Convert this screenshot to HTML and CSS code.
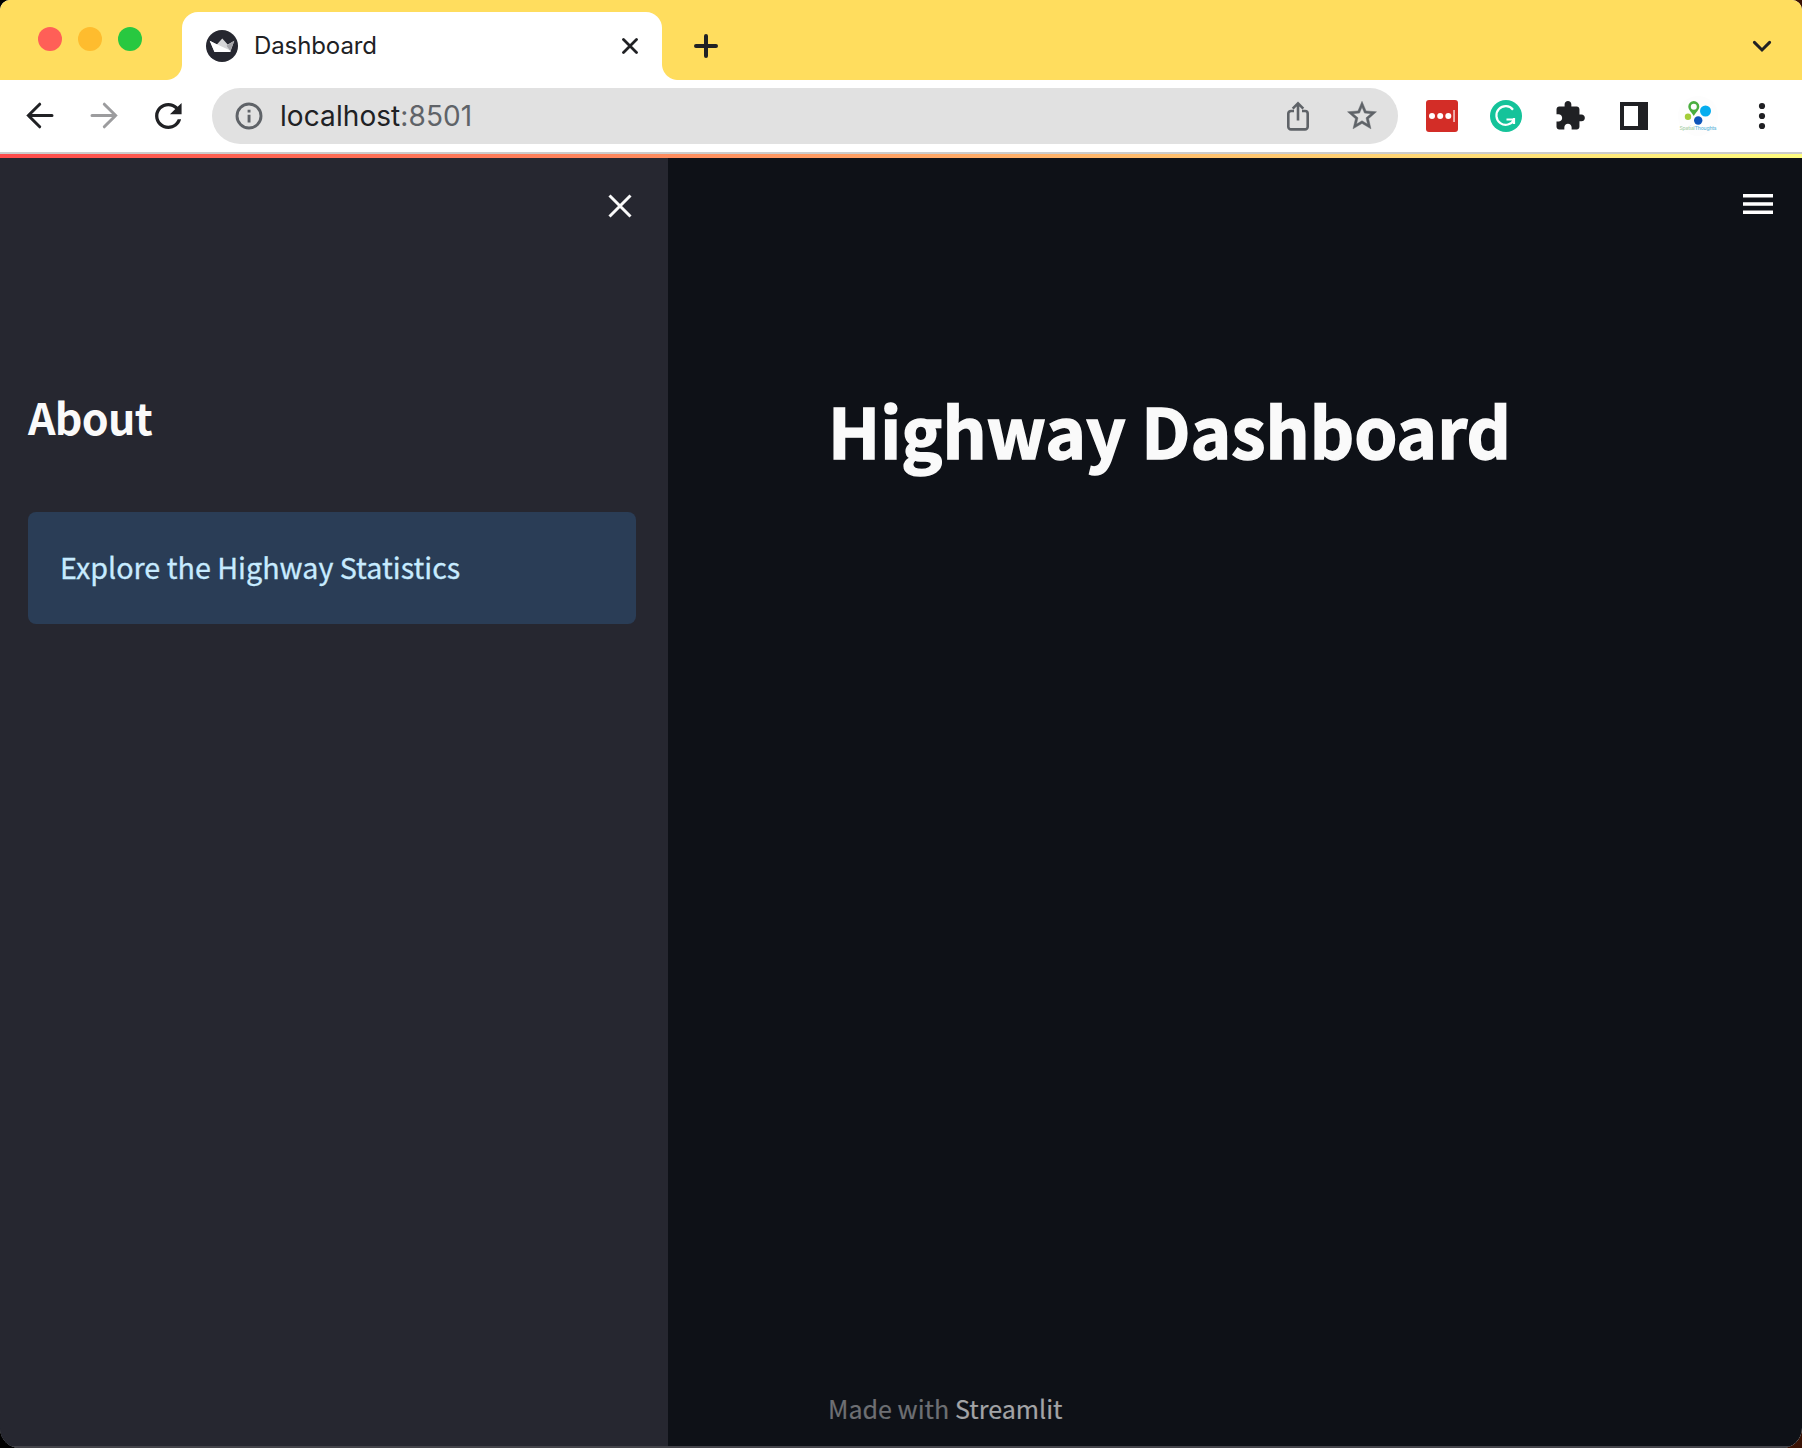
FILE: index.html
```html
<!DOCTYPE html>
<html lang="en">
<head>
<meta charset="utf-8">
<title>Dashboard</title>
<link rel="stylesheet" href="styles.css">
</head>
<body>
<div class="window">
  <header class="tabstrip">
    <div class="lights"><i class="light red"></i><i class="light amber"></i><i class="light green"></i></div>
    <div class="tab">
      <svg class="favicon" viewBox="0 0 32 32"><circle cx="16" cy="16" r="16" fill="#262730"/><path d="M3.700 10.800 10.800 14.500 16.300 8.600 21.700 14.500 28.300 10.800 24.300 22H8.500z" fill="#d6d6d8"/><path d="M3.700 10.800 10.800 14.200 24.300 20.500V22H8.500z" fill="#fff"/><path d="M28.300 10.800 24.300 21 20.500 15.800z" fill="#a2a2a6"/></svg>
      <span class="tab-title">Dashboard</span>
      <svg class="tab-close" viewBox="0 0 16 16"><path d="M1.500 1.500l13 13M14.500 1.500l-13 13"/></svg>
    </div>
    <svg class="new-tab" viewBox="0 0 24 24"><path d="M12 2v20M2 12h20"/></svg>
    <svg class="tab-search" viewBox="0 0 20 14"><path d="M2.400 3.400 10 11l7.600-7.600"/></svg>
  </header>
  <nav class="toolbar">
    <svg class="icon line" viewBox="0 0 40 40"><path d="M32 19.500H8.500M19.700 8.200 8.400 19.500 19.700 30.800"/></svg>
    <svg class="icon line muted" viewBox="0 0 40 40"><path d="M8 19.500h23.500M20.300 8.200l11.300 11.300-11.300 11.300"/></svg>
    <svg class="icon" viewBox="0 0 40 40"><path transform="translate(.4 .5) scale(1.66 1.62)" d="M17.650 6.350C16.200 4.900 14.210 4 12 4c-4.420 0-7.990 3.580-7.990 8s3.570 8 7.990 8c3.730 0 6.840-2.550 7.730-6h-2.080c-.82 2.330-3.040 4-5.650 4-3.310 0-6-2.690-6-6s2.690-6 6-6c1.660 0 3.140.69 4.220 1.780L13 11h7V4l-2.350 2.350z"/></svg>
    <div class="omnibox">
      <svg class="info" viewBox="0 0 28 28"><circle cx="14" cy="14" r="12" fill="none" stroke="#5f6368" stroke-width="2.900"/><path d="M12.600 7.700h2.900v2.900h-2.900zM12.600 12.700h2.900v7.800h-2.900z" fill="#5f6368"/></svg>
      <span class="url">localhost<span class="port">:8501</span></span>
      <svg class="icon grey" viewBox="0 0 40 40"><path fill="none" stroke="#5f6368" stroke-width="2.600" d="M16 15h-3a2.700 2.700 0 0 0-2.700 2.700v13a2.700 2.700 0 0 0 2.700 2.700h14a2.700 2.700 0 0 0 2.700-2.700v-13A2.700 2.700 0 0 0 27 15h-3M20 24.500V8M14.700 12.700 20 7.400l5.300 5.300"/></svg>
      <svg class="icon grey star" viewBox="0 0 40 40"><path transform="translate(2.600 2.400) scale(1.45)" d="M22 9.240l-7.190-.62L12 2 9.190 8.630 2 9.240l5.460 4.730L5.820 21 12 17.270 18.180 21l-1.630-7.030L22 9.240zM12 15.400l-3.760 2.270 1-4.280-3.320-2.880 4.380-.38L12 6.100l1.710 4.040 4.380.38-3.320 2.880 1 4.280L12 15.400z"/></svg>
    </div>
    <svg class="icon" viewBox="0 0 40 40"><rect x="4" y="4" width="32" height="32" rx="3" fill="#d32d27"/><g fill="#fff"><circle cx="10" cy="20" r="3"/><circle cx="18.200" cy="20" r="3"/><circle cx="26.300" cy="20" r="3"/><path d="M31.300 14h1.500v12h-1.500z" opacity=".8"/></g></svg>
    <svg class="icon" viewBox="0 0 40 40"><circle cx="20" cy="20" r="16" fill="#15c39a"/><path d="M27 13.700a9.300 9.300 0 1 0 1 10M20.500 23.500h7.300M28 22v6" fill="none" stroke="#fff" stroke-width="2.200"/></svg>
    <svg class="icon" viewBox="0 0 40 40"><path transform="translate(3.800 3.700) scale(1.35)" d="M20.500 11H19V7c0-1.100-.9-2-2-2h-4V3.500C13 2.120 11.880 1 10.500 1S8 2.120 8 3.500V5H4c-1.100 0-1.990.9-1.990 2v3.800H3.500c1.490 0 2.700 1.210 2.700 2.700s-1.210 2.700-2.700 2.700H2V20c0 1.100.9 2 2 2h3.800v-1.500c0-1.490 1.210-2.700 2.700-2.700s2.700 1.210 2.700 2.700V22H17c1.100 0 2-.9 2-2v-4h1.500c1.380 0 2.500-1.120 2.500-2.500S21.880 11 20.500 11z"/></svg>
    <svg class="icon" viewBox="0 0 40 40"><path fill-rule="evenodd" d="M6 6h28v28H6zM10 10v20h14V10z"/></svg>
    <svg class="icon" viewBox="0 0 40 40"><circle cx="20" cy="20" r="20" fill="#fdfdfd"/><path fill="#4aae3f" fill-rule="evenodd" d="M15.800 5a5.500 5.500 0 0 0-5.500 5.600c0 3.500 3.500 5.900 5.500 9.400 2-3.500 5.500-5.900 5.500-9.400A5.500 5.500 0 0 0 15.800 5zm0 2.800a3 3 0 1 1 0 6 3 3 0 0 1 0-6z"/><circle cx="27.500" cy="15" r="5.500" fill="#05adef"/><circle cx="10" cy="20.700" r="3.200" fill="#a4cd39"/><circle cx="20.200" cy="24.500" r="4.200" fill="#0d55bb"/><text x="1.500" y="34" font-size="5" textLength="37" class="brand"><tspan fill="#a9cfa8">Spatial</tspan><tspan fill="#62b5da">Thoughts</tspan></text></svg>
    <svg class="icon" viewBox="0 0 40 40"><circle cx="20" cy="10" r="3.100"/><circle cx="20" cy="20" r="3.100"/><circle cx="20" cy="30" r="3.100"/></svg>
  </nav>
  <div class="decoration"></div>
  <div class="app">
    <aside class="sidebar">
      <svg class="side-close" viewBox="0 0 24 24"><path d="M1.500 1.500l21 21M22.500 1.500l-21 21"/></svg>
      <h2 class="about">About</h2>
      <div class="alert"><span class="alert-text">Explore the Highway Statistics</span></div>
    </aside>
    <main class="main">
      <svg class="menu" viewBox="0 0 30 20"><path d="M0 0h30v3.500H0zM0 8.200h30v3.500H0zM0 16.500h30V20H0z"/></svg>
      <h1 class="title">Highway Dashboard</h1>
      <footer class="footer">Made with <span class="streamlit">Streamlit</span></footer>
    </main>
  </div>
</div>
</body>
</html>
```
FILE: styles.css
```css
* { box-sizing: border-box; }
html { background: linear-gradient(90deg, #000 50%, #3a1204); }
body { margin: 0; font-family: Inter, "Liberation Sans", sans-serif; color: #202124; }
svg { display: block; flex: none; }
.window { height: 1448px; display: flex; flex-direction: column; border-radius: 10px 10px 20px 20px; overflow: hidden; background: #fff; }
.tabstrip { height: 80px; display: flex; background: #ffdd5e; }
.lights { display: flex; gap: 16px; width: 182px; padding: 27px 0 0 38px; }
.light { width: 24px; height: 24px; border-radius: 50%; }
.red { background: #ff5f57; }
.amber { background: #febc2e; }
.green { background: #28c840; }
.tab { position: relative; display: flex; align-items: center; width: 480px; height: 68px; margin-top: 12px; padding: 0 24px; background: #fff; border-radius: 16px 16px 0 0; }
.tab::before, .tab::after { content: ""; position: absolute; bottom: 0; width: 16px; height: 16px; }
.tab::before { left: -16px; background: radial-gradient(circle at 0 0, transparent 15.5px, #fff 16.5px); }
.tab::after { right: -16px; background: radial-gradient(circle at 100% 0, transparent 15.5px, #fff 16.5px); }
.favicon { width: 32px; height: 32px; }
.tab-title { flex: 1; margin-left: 16px; font-size: 24px; line-height: 32px; letter-spacing: -.1px; }
.tab-close { width: 16px; height: 16px; fill: none; stroke: #202124; stroke-width: 2.8; stroke-linecap: round; }
.new-tab { width: 24px; height: 24px; margin: 34px 0 0 32px; fill: none; stroke: #202124; stroke-width: 4; stroke-linecap: round; }
.tab-search { width: 20px; height: 14px; margin: 39px 30px 0 auto; fill: none; stroke: #202124; stroke-width: 3; stroke-linecap: round; }
.toolbar { display: flex; align-items: center; gap: 24px; height: 74px; padding: 0 20px; border-bottom: 2px solid #ccc; }
.icon { width: 40px; height: 40px; fill: #202124; }
.line { fill: none; stroke: #202124; stroke-width: 3; stroke-linecap: round; }
.muted { stroke: #9c9c9e; }
.grey { fill: #5f6368; }
.star { stroke: #5f6368; stroke-width: .3; }
.omnibox { flex: 1; display: flex; align-items: center; gap: 24px; height: 56px; padding: 0 16px 0 22px; border-radius: 28px; background: #e1e1e1; }
.info { width: 28px; height: 28px; margin-left: .5px; margin-right: -6.5px; }
.url { flex: 1; font-size: 28px; line-height: 36px; letter-spacing: .08px; }
.port { color: #5f6368; }
.brand { font-family: Inter, sans-serif; font-weight: 500; }
.decoration { height: 4px; background: linear-gradient(90deg, #ff4b4b, #fffd80); }
.app { flex: 1; display: flex; border-bottom: 2px solid #44444a; background: #0e1117; font-family: "Noto Sans CJK SC", sans-serif; color: #fafafa; }
.sidebar { width: 668px; padding: 36px 32px 0 28px; background: #262730; display: flex; flex-direction: column; }
.side-close { width: 24px; height: 24px; align-self: flex-end; margin-right: 4px; fill: none; stroke: #fafafa; stroke-width: 3; }
.about { margin: 168px 0 0; font-size: 43px; line-height: 60px; font-weight: 700; letter-spacing: -.7px; }
.alert { width: 608px; height: 112px; margin-top: 66px; padding: 0 32px 2px; border-radius: 8px; background: #2a3d56; display: flex; align-items: center; }
.alert-text { font-size: 28.7px; line-height: 40px; color: #c7ebff; -webkit-text-stroke: .3px #c7ebff; }
.main { flex: 1; display: flex; flex-direction: column; padding: 36px 29px 18px 160px; }
.menu { width: 30px; height: 20px; align-self: flex-end; fill: #fff; }
.title { margin: 165px 0 0; font-size: 69px; line-height: 100px; font-weight: 700; white-space: nowrap; -webkit-text-stroke: 1.5px #fafafa; }
.footer { margin-top: auto; font-size: 25.1px; line-height: 40px; color: #6d6f73; -webkit-text-stroke: .2px; }
.streamlit { color: #a3a4a6; }
```
